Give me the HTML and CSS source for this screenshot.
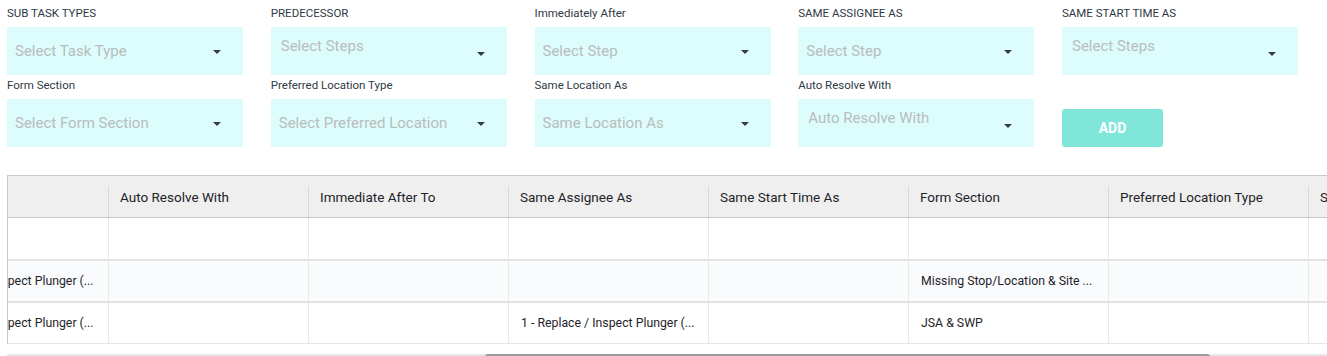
FILE: index.html
```html
<!DOCTYPE html>
<html>
<head>
<meta charset="utf-8">
<link rel="stylesheet" href="styles.css">
</head>
<body>
<div class="page">
  <div class="form-grid">
    <div class="field">
      <div class="label">SUB TASK TYPES</div>
      <div class="select"><span class="ph">Select Task Type</span><span class="caret"></span></div>
    </div>
    <div class="field">
      <div class="label">PREDECESSOR</div>
      <div class="select multi"><span class="ph">Select Steps</span><span class="caret"></span></div>
    </div>
    <div class="field">
      <div class="label">Immediately After</div>
      <div class="select"><span class="ph">Select Step</span><span class="caret"></span></div>
    </div>
    <div class="field">
      <div class="label">SAME ASSIGNEE AS</div>
      <div class="select"><span class="ph">Select Step</span><span class="caret"></span></div>
    </div>
    <div class="field">
      <div class="label">SAME START TIME AS</div>
      <div class="select multi"><span class="ph">Select Steps</span><span class="caret"></span></div>
    </div>
    <div class="field">
      <div class="label">Form Section</div>
      <div class="select"><span class="ph">Select Form Section</span><span class="caret"></span></div>
    </div>
    <div class="field">
      <div class="label">Preferred Location Type</div>
      <div class="select"><span class="ph">Select Preferred Location</span><span class="caret"></span></div>
    </div>
    <div class="field">
      <div class="label">Same Location As</div>
      <div class="select"><span class="ph">Same Location As</span><span class="caret"></span></div>
    </div>
    <div class="field">
      <div class="label">Auto Resolve With</div>
      <div class="select multi"><span class="ph">Auto Resolve With</span><span class="caret"></span></div>
    </div>
    <div class="field">
      <div class="label"></div>
      <div class="btn-slot"><button class="add-btn">ADD</button></div>
    </div>
  </div>

  <div class="table-wrap">
    <table class="grid">
      <thead>
        <tr>
          <th></th>
          <th>Auto Resolve With</th>
          <th>Immediate After To</th>
          <th>Same Assignee As</th>
          <th>Same Start Time As</th>
          <th>Form Section</th>
          <th>Preferred Location Type</th>
          <th>Same Location As</th>
        </tr>
      </thead>
      <tbody>
        <tr class="first">
          <td></td><td></td><td></td><td></td><td></td><td></td><td></td><td></td>
        </tr>
        <tr class="alt">
          <td>1 - Replace / Inspect Plunger (...</td><td></td><td></td><td></td><td></td><td>Missing Stop/Location &amp; Site ...</td><td></td><td></td>
        </tr>
        <tr class="last">
          <td>1 - Replace / Inspect Plunger (...</td><td></td><td></td><td>1 - Replace / Inspect Plunger (...</td><td></td><td>JSA &amp; SWP</td><td></td><td></td>
        </tr>
      </tbody>
    </table>
  </div>
  <div class="hscroll"><div class="thumb" style="margin-left: 478px; width: 725px;"></div></div>
</div>
</body>
</html>
```

FILE: styles.css
```css
* { box-sizing: border-box; }
html, body { margin: 0; padding: 0; background: #fff; }
body {
  font-family: Roboto, "Liberation Sans", sans-serif;
  color: #2a3340;
  overflow: hidden;
}
.page {
  padding: 5px 0 0 7px;
  width: 1327px;
}
.form-grid {
  display: grid;
  grid-template-columns: repeat(5, 236px);
  column-gap: 27.75px;
  row-gap: 2px;
}
.field { display: flex; flex-direction: column; }
.label {
  height: 16px;
  line-height: 16px;
  font-size: 11.5px;
  color: #2f3946;
  margin-bottom: 6px;
  white-space: nowrap;
}
.select {
  height: 48px;
  background: #dcfdfc;
  display: flex;
  align-items: center;
  justify-content: space-between;
  padding: 0 22px 0 8px;
}
.select.multi {
  align-items: flex-start;
  padding-left: 10px;
  padding-top: 10px;
}
.select.multi .caret { margin-top: 15px; }
.ph {
  font-size: 15px;
  color: #b9bcbd;
  white-space: nowrap;
}
.caret {
  width: 0; height: 0;
  border-left: 4px solid transparent;
  border-right: 4px solid transparent;
  border-top: 4px solid #353a3f;
  margin-top: 2px;
}
.btn-slot {
  height: 48px;
  display: flex;
  align-items: flex-end;
}
.add-btn {
  width: 101px;
  height: 38px;
  border: none;
  border-radius: 3px;
  background: #7fe6d9;
  color: #fff;
  font-family: Roboto, "Liberation Sans", sans-serif;
  font-weight: 700;
  font-size: 14px;
  padding: 0;
}
.table-wrap {
  margin-top: 28px;
  border-top: 1px solid #c9c9c9;
  border-left: 1px solid #c9c9c9;
  overflow: hidden;
  width: 1320px;
}
.grid {
  border-collapse: separate;
  border-spacing: 0;
  table-layout: fixed;
  width: 1600px;
  margin-left: -100px;
}
.grid th, .grid td {
  width: 200px;
  padding: 0 12px;
  text-align: left;
  white-space: nowrap;
  overflow: hidden;
}
.grid th {
  height: 42px;
  background: #efefef linear-gradient(#d9d9d9, #d9d9d9) no-repeat left 10px / 1px 100%;
  border-bottom: 1px solid #c8c8c8;
  font-weight: 400;
  font-size: 13.5px;
  color: #1e2329;
}
.grid td {
  height: 42px;
  font-size: 12.3px;
  color: #1f2328;
  border-left: 1px solid #e8e8e8;
  border-bottom: 2px solid #e2e2e2;
}
.grid td:first-child { text-overflow: clip; }
.grid tr.first td { height: 43px; }
.grid tr.alt td { background: #f9fbfd; }
.grid tr.last td { border-bottom: 1px solid #e4e4e4; height: 41px; }
.grid th:first-child, .grid td:first-child { border-left: none; background-image: none; }
.hscroll {
  margin-top: 10px;
  height: 6px;
  width: 1320px;
  background: #e8e8e8;
}
.thumb {
  height: 6px;
  background: #9b9b9b;
  border-radius: 3px;
}
```
